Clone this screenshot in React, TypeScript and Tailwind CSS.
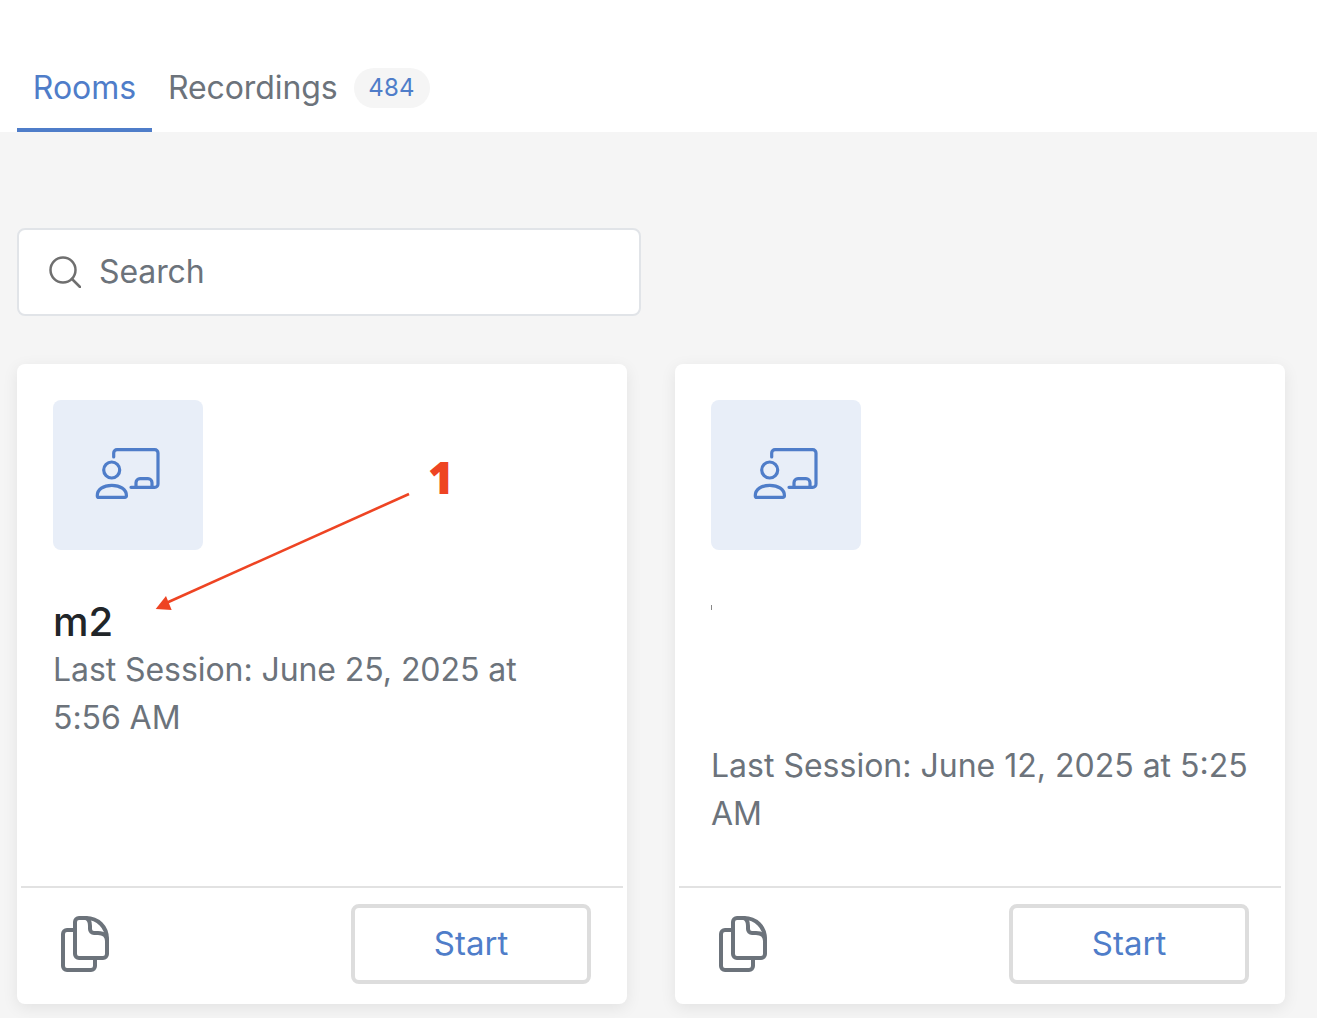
const RoomIcon = () => (
  <svg width="66" height="56" viewBox="0 0 66 56" fill="none" stroke="#4f7dc9" strokeWidth="3.200" strokeLinecap="round" strokeLinejoin="round">
    <path d="M18.700 10V6a3.300 3.300 0 0 1 3.300-3.300h37.700a3.300 3.300 0 0 1 3.300 3.300v31a3.300 3.300 0 0 1-3.300 3.300H36" />
    <circle cx="16.700" cy="23" r="8" />
    <path d="M2.300 48.400c0-6 6-10.100 14.500-10.100s14.600 4.100 14.600 10.100v.5a1.500 1.500 0 0 1-1.500 1.500H3.800a1.500 1.500 0 0 1-1.500-1.500z" />
    <path d="M41 40v-4.300a4 4 0 0 1 4-4h8a4 4 0 0 1 4 4V40" />
  </svg>
);

const CopyIcon = () => (
  <svg width="50" height="58" viewBox="0 0 50 58" fill="none" stroke="#6c737b" strokeWidth="4" strokeLinecap="round" strokeLinejoin="round">
    <path d="M14 14H6a4 4 0 0 0-4 4v32a4 4 0 0 0 4 4h24a4 4 0 0 0 4-4v-8" />
    <path d="M14 6a4 4 0 0 1 4-4h7c12 0 21 9 21 21v15a4 4 0 0 1-4 4H18a4 4 0 0 1-4-4z" />
    <path d="M25 2c3 1 4 4 4 8v3a4 4 0 0 0 4 4h4c5 0 9 2 9 8" />
  </svg>
);

const SearchIcon = () => (
  <svg width="32" height="32" viewBox="0 0 32 32" fill="none" stroke="#6f6f6f" strokeWidth="2.500" strokeLinecap="round">
    <circle cx="14" cy="14" r="12.500" />
    <path d="M23 23l8 8" />
  </svg>
);

const Card = ({ title, session }: { title: string; session: string }) => (
  <div className="flex h-[640px] w-[610px] flex-col rounded-lg bg-white shadow-[0_4px_16px_rgba(0,0,0,0.08)]">
    <div className="flex-1 px-9 pt-9">
      <div className="flex h-[150px] w-[150px] items-center justify-center rounded-lg bg-[#e8eef8]">
        <RoomIcon />
      </div>
      <div className="mt-[48px] h-[48px] text-[40px] leading-[48px] font-medium text-[#212529]">{title}</div>
      <p className="text-[32px] leading-[48px] tracking-[-0.07px] text-[#6c737b]">{session}</p>
    </div>
    <div className="mx-1 flex h-[118px] items-start justify-between border-t-2 border-[#e2e2e2] pt-4 pr-8 pl-10">
      <div className="pt-[12px]">
        <CopyIcon />
      </div>
      <button className="h-[80px] w-[240px] rounded-lg border-4 border-[#dddddd] bg-white text-[33px] text-[#4f7dc9]">
        Start
      </button>
    </div>
  </div>
);

export default function App() {
  return (
    <div className="relative h-[1018px] w-[1317px] overflow-hidden bg-[#f5f5f5] font-['Inter',sans-serif]">
      <div className="flex h-[132px] items-end bg-white pl-[17px]">
        <div className="flex h-[88px] w-[135px] items-center justify-center border-b-4 border-[#4f7dc9] pt-1 text-[32px] text-[#4f7dc9]">
          Rooms
        </div>
        <div className="ml-4 flex h-[88px] items-center text-[32px] tracking-[-0.1px] text-[#6c737b]">Recordings</div>
        <div className="mb-[24px] ml-4 flex h-10 w-[76px] items-center justify-center rounded-full bg-[#f5f5f5] text-[24px] tracking-[0.2px] text-[#4f7dc9]">
          484
        </div>
      </div>

      <div className="pt-24 pl-[17px]">
        <div className="flex h-[88px] w-[624px] items-center rounded-lg border-2 border-[#e1e4e8] bg-white pl-[30px]">
          <SearchIcon />
          <span className="ml-[18px] text-[32px] tracking-[-0.1px] text-[#6c737b]">Search</span>
        </div>

        <div className="mt-12 flex gap-12">
          <Card title="m2" session="Last Session: June 25, 2025 at 5:56 AM" />
          <Card title="" session="" />
        </div>
      </div>

      <div className="absolute top-[742px] left-[711px] w-[540px] text-[32px] leading-[48px] text-[#6c737b]">
        Last Session: June 12, 2025 at 5:25 AM
      </div>
      <div className="absolute top-[605px] left-[711px] h-[5px] w-px bg-[#888888]" />

      {/* annotation */}
      <svg className="absolute top-[485px] left-[150px]" width="265" height="130" viewBox="0 0 265 130" fill="none">
        <path d="M259 9L14 119" stroke="#ee4423" strokeWidth="2.600" />
        <path d="M5.700 124L16 111L21.700 125Z" fill="#ee4423" />
      </svg>
      <div className="absolute top-[449px] left-[428px] font-['Open_Sans',sans-serif] text-[44px] leading-[56px] font-extrabold text-[#ee4423]">
        1
      </div>
    </div>
  );
}
